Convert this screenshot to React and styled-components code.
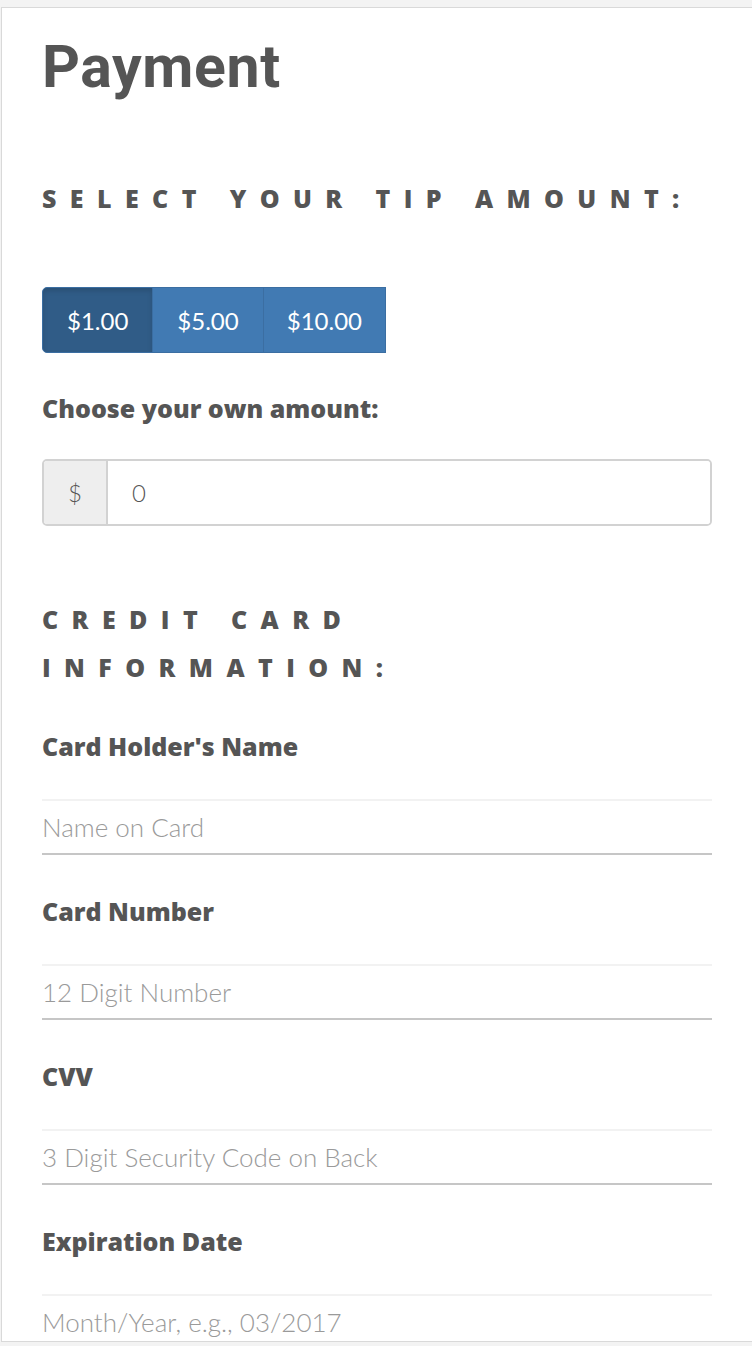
import React from "react";
import styled, { createGlobalStyle } from "styled-components";

const GlobalStyle = createGlobalStyle`
  html, body {
    margin: 0;
    padding: 0;
    background: #f3f3f3;
    overflow: hidden;
  }
  body {
    font-family: Lato, "Liberation Sans", sans-serif;
    color: #555;
  }
  * { box-sizing: border-box; }
`;

const titleFont = `Roboto, "Liberation Sans", sans-serif`;
const heavy = `"Open Sans", "Liberation Sans", sans-serif`;

const Page = styled.div`
  padding-top: 7px;
  padding-left: 1px;
`;

const Card = styled.main`
  height: 1335px;
  overflow: hidden;
  background: #fff;
  border: 1px solid #d9d9d9;
  border-right: none;
  padding: 23px 40px 0 40px;
`;

const Title = styled.h1`
  margin: 0;
  font-family: ${titleFont};
  font-size: 59px;
  font-weight: 700;
  letter-spacing: 0.6px;
  line-height: 72px;
  color: #555;
`;

const SpacedHeading = styled.h3`
  margin: ${(p) => p.$mt || "70px"} 0 0;
  max-width: ${(p) => p.$maxWidth || "none"};
  font-family: ${heavy};
  font-size: 25px;
  font-weight: 800;
  letter-spacing: 13.4px;
  line-height: 48px;
  text-transform: uppercase;
  color: #555;
`;

const TipGroup = styled.div`
  display: flex;
  margin-top: 65px;
`;

const TipButton = styled.button`
  height: 66px;
  padding: 0 ${(p) => p.$px || "24px"};
  border: 1px solid #3b6ea2;
  margin-left: -1px;
  background: ${(p) => (p.$active ? "#305c87" : "#417ab3")};
  box-shadow: ${(p) => (p.$active ? "inset 0 3px 5px rgba(0,0,0,0.13)" : "none")};
  color: #fff;
  font-family: Lato, "Liberation Sans", sans-serif;
  font-size: 24px;
  font-weight: 400;
  &:first-child {
    margin-left: 0;
    border-radius: 5px 0 0 5px;
  }
`;

const Label = styled.label`
  display: block;
  font-family: ${heavy};
  font-size: 25px;
  font-weight: 800;
  line-height: 30px;
  color: #555;
  margin-top: ${(p) => p.$mt || "0"};
`;

const InputGroup = styled.div`
  display: flex;
  height: 67px;
  margin-top: 36px;
  border: 2px solid #d2d2d2;
  border-radius: 5px;
  overflow: hidden;
`;

const Addon = styled.span`
  width: 64px;
  display: flex;
  align-items: center;
  justify-content: center;
  background: #eee;
  border-right: 2px solid #d2d2d2;
  font-size: 24px;
  font-weight: 300;
  color: #555;
`;

const AmountInput = styled.input`
  flex: 1;
  border: none;
  outline: none;
  padding: 0 24px;
  font-family: Lato, "Liberation Sans", sans-serif;
  font-size: 24px;
  font-weight: 300;
  color: #555;
`;

const Field = styled.div`
  margin-top: ${(p) => p.$mt || "41px"};
`;

const LineInput = styled.input`
  display: block;
  width: 100%;
  height: 56px;
  margin-top: 38px;
  padding: 0;
  border: none;
  border-top: 2px solid #f2f2f2;
  border-bottom: 2px solid #c6c6c6;
  outline: none;
  font-family: Lato, "Liberation Sans", sans-serif;
  font-size: 26px;
  font-weight: 300;
  color: #555;
  &::placeholder {
    color: #9a9a9a;
  }
`;

const fields = [
  { label: "Card Holder's Name", placeholder: "Name on Card" },
  { label: "Card Number", placeholder: "12 Digit Number" },
  { label: "CVV", placeholder: "3 Digit Security Code on Back" },
  { label: "Expiration Date", placeholder: "Month/Year, e.g., 03/2017" },
];

export default function App() {
  return (
    <>
      <GlobalStyle />
      <Page>
        <Card>
          <Title>Payment</Title>
          <SpacedHeading $mt="71px">Select your tip amount:</SpacedHeading>
          <TipGroup>
            <TipButton $active>$1.00</TipButton>
            <TipButton>$5.00</TipButton>
            <TipButton $px="23px">$10.00</TipButton>
          </TipGroup>
          <Label $mt="40px">Choose your own amount:</Label>
          <InputGroup>
            <Addon>$</Addon>
            <AmountInput defaultValue="0" />
          </InputGroup>
          <SpacedHeading $mt="69px" $maxWidth="440px">
            Credit card information:
          </SpacedHeading>
          {fields.map((f, i) => (
            <Field key={f.label} $mt={i === 0 ? "40px" : "41px"}>
              <Label>{f.label}</Label>
              <LineInput placeholder={f.placeholder} />
            </Field>
          ))}
        </Card>
      </Page>
    </>
  );
}
